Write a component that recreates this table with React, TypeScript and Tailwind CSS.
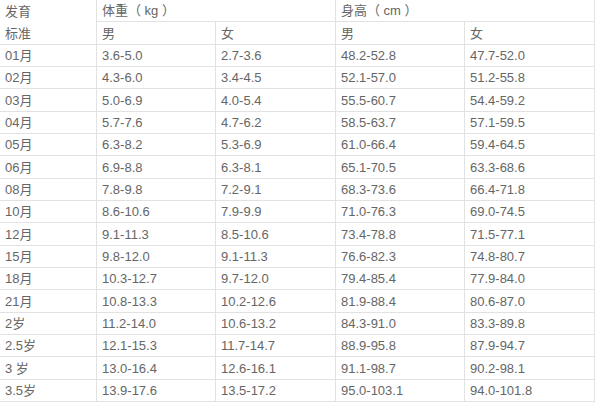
const rows: [string, string, string, string, string][] = [
  ['01月', '3.6-5.0', '2.7-3.6', '48.2-52.8', '47.7-52.0'],
  ['02月', '4.3-6.0', '3.4-4.5', '52.1-57.0', '51.2-55.8'],
  ['03月', '5.0-6.9', '4.0-5.4', '55.5-60.7', '54.4-59.2'],
  ['04月', '5.7-7.6', '4.7-6.2', '58.5-63.7', '57.1-59.5'],
  ['05月', '6.3-8.2', '5.3-6.9', '61.0-66.4', '59.4-64.5'],
  ['06月', '6.9-8.8', '6.3-8.1', '65.1-70.5', '63.3-68.6'],
  ['08月', '7.8-9.8', '7.2-9.1', '68.3-73.6', '66.4-71.8'],
  ['10月', '8.6-10.6', '7.9-9.9', '71.0-76.3', '69.0-74.5'],
  ['12月', '9.1-11.3', '8.5-10.6', '73.4-78.8', '71.5-77.1'],
  ['15月', '9.8-12.0', '9.1-11.3', '76.6-82.3', '74.8-80.7'],
  ['18月', '10.3-12.7', '9.7-12.0', '79.4-85.4', '77.9-84.0'],
  ['21月', '10.8-13.3', '10.2-12.6', '81.9-88.4', '80.6-87.0'],
  ['2岁', '11.2-14.0', '10.6-13.2', '84.3-91.0', '83.3-89.8'],
  ['2.5岁', '12.1-15.3', '11.7-14.7', '88.9-95.8', '87.9-94.7'],
  ['3 岁', '13.0-16.4', '12.6-16.1', '91.1-98.7', '90.2-98.1'],
  ['3.5岁', '13.9-17.6', '13.5-17.2', '95.0-103.1', '94.0-101.8'],
];

const cell = 'flex items-center pl-[5px] pt-[1px] border-r border-b border-[#e2e2e2] whitespace-pre';

export default function App() {
  return (
    <div
      className="w-[600px] h-[404px] bg-white text-[13px] text-[#666666] overflow-hidden"
      style={{ fontFamily: '"Liberation Sans", "Noto Sans CJK SC", sans-serif' }}
    >
      <div className="grid grid-cols-[97px_119px_120px_129px_130px] auto-rows-[22.33px]">
        {/* header row 1 */}
        <div className="flex items-center pl-[5px] pt-[1px] border-r border-[#e2e2e2]">发育</div>
        <div className={`${cell} col-span-2`}>体重（ kg ）</div>
        <div className={`${cell} col-span-2`}>身高（ cm ）</div>

        {/* header row 2 */}
        <div className={cell}>标准</div>
        <div className={cell}>男</div>
        <div className={cell}>女</div>
        <div className={cell}>男</div>
        <div className={cell}>女</div>

        {rows.map((r) =>
          r.map((v, i) => (
            <div key={r[0] + i} className={cell}>
              {v}
            </div>
          ))
        )}
      </div>
    </div>
  );
}
